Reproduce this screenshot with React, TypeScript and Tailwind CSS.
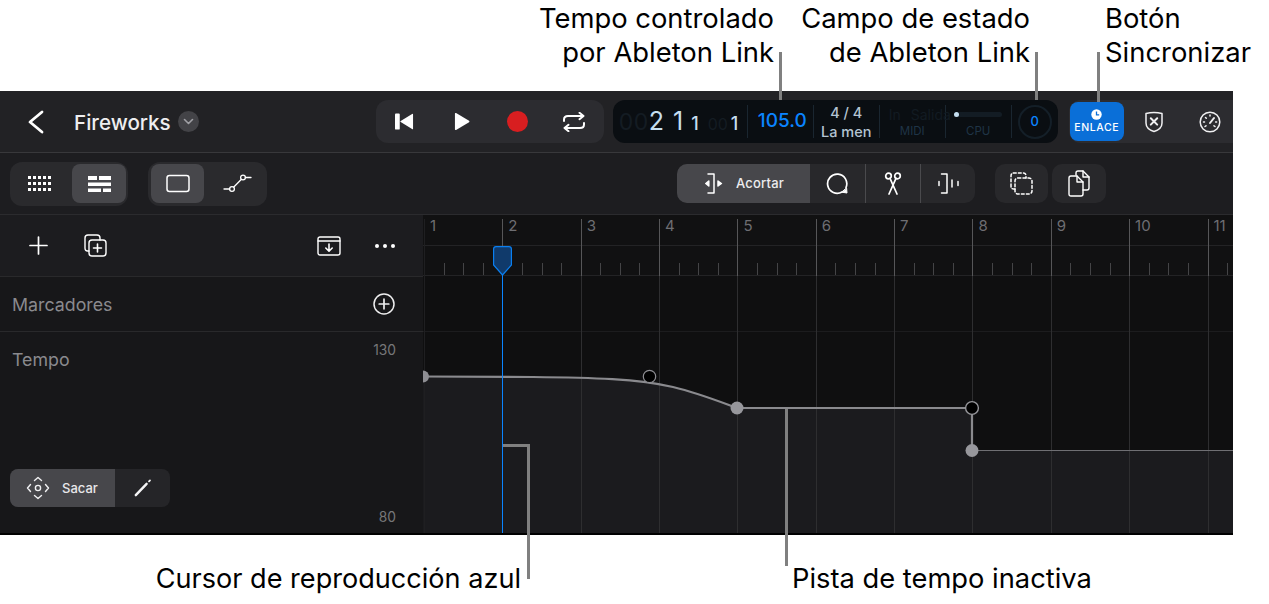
import React from "react";

const S = (p: React.SVGProps<SVGSVGElement>) => (
  <svg fill="none" stroke="currentColor" strokeLinecap="round" strokeLinejoin="round" {...p} />
);

const bars = [0, 1, 2, 3, 4, 5, 6, 7, 8, 9, 10];
const STEP = 78.35;
const X0 = 1;
const CURVE = "M0 161.5 L110 162 C170 162.5 215 164 250 172 C275 178 295 186 314 193 L549 193";

function Timeline() {
  const majors = bars.map((i) => Math.round(X0 + STEP * i) + 0.5);
  const ticks: number[] = [];
  for (let i = 0; i < 44; i++) if (i % 4 !== 0) ticks.push(Math.round(X0 + (STEP / 4) * i) + 0.5);
  return (
    <svg className="absolute inset-0" width="811" height="318" viewBox="0 0 811 318">
      <rect x="0" y="0" width="811" height="318" fill="#0f0f10" />
      <path d={CURVE + " L549 235.5 L811 235.5 L811 318 L0 318 Z"} fill="#1b1b1e" />
      <rect x="0" y="0" width="811" height="61" fill="#111112" />
      <line x1="0" x2="811" y1="30.5" y2="30.5" stroke="#232325" />
      <line x1="0" x2="811" y1="60.5" y2="60.5" stroke="#232325" />
      <line x1="0" x2="811" y1="116.5" y2="116.5" stroke="#1c1c1e" />
      {majors.map((x, i) => (
        <g key={x}>
          <line x1={x} x2={x} y1="4" y2="61" stroke={i === 0 ? "#1f1f21" : "#565658"} />
          <line x1={x} x2={x} y1="61" y2="318" stroke={i === 0 ? "#1f1f21" : "#2e2e30"} />
        </g>
      ))}
      {ticks.map((x) => (
        <line key={x} x1={x} x2={x} y1="48" y2="60" stroke="#444446" />
      ))}
      <path d={CURVE + " L549 235.5"} stroke="#8a8a8e" strokeWidth="2.2" fill="none" />
      <line x1="549" x2="811" y1="235.5" y2="235.5" stroke="#6f6f73" strokeWidth="1" />
      <path d="M0 155.5 A6 6 0 0 1 0 167.5 Z" fill="#8e8e93" />
      <circle cx="226.5" cy="161.5" r="6.2" fill="#000" stroke="#8e8e93" strokeWidth="1.2" />
      <circle cx="314" cy="193" r="6.5" fill="#97979c" />
      <circle cx="549" cy="193" r="6.4" fill="#000" stroke="#97979c" strokeWidth="1.4" />
      <circle cx="549" cy="235.5" r="6.5" fill="#97979c" />
    </svg>
  );
}

function Group({ className = "", children }: { className?: string; children: React.ReactNode }) {
  return <div className={"flex items-center rounded-[10px] " + className}>{children}</div>;
}

function Callout({ first, second, className }: { first: string; second: string; className: string }) {
  return (
    <div className={className}>
      <div>{first}</div>
      <div>{second}</div>
    </div>
  );
}

export default function App() {
  const sans = "[font-family:Inter,'Liberation_Sans',sans-serif]";
  return (
    <div className={"relative h-[604px] w-[1269px] overflow-hidden bg-white text-black " + sans}>
      {/* top callouts */}
      <div className="flex h-[91px] pt-[1px] text-[27.4px] leading-[34px]">
        <Callout first="Tempo controlado" second="por Ableton Link" className="ml-[474px] w-[300px] text-right" />
        <Callout first="Campo de estado" second="de Ableton Link" className="ml-[16px] w-[240px] text-right" />
        <Callout first="Botón" second="Sincronizar" className="ml-[75px] w-[160px] whitespace-nowrap" />
      </div>

      {/* application */}
      <div className="flex h-[444px] w-[1233px] flex-col overflow-hidden border-b-2 border-black bg-[#1c1c1f] text-white">
        {/* transport bar */}
        <div className="flex h-[62px] shrink-0 items-center border-b border-[#38383b] bg-[#222225]">
          <S width="18" height="26" viewBox="0 0 18 26" strokeWidth="2.8" className="ml-[27px] text-white">
            <path d="M15 3 L3 13 L15 23" />
          </S>
          <span className="ml-[29px] mt-[4px] text-[20.6px] font-medium text-[#eeeef0]">Fireworks</span>
          <span className="ml-[7px] flex h-[21px] w-[21px] items-center justify-center rounded-full bg-[#434347] text-[#a0a0a5]">
            <S width="11" height="8" viewBox="0 0 11 8" strokeWidth="1.6"><path d="M1.5 1.5 L5.5 5.5 L9.5 1.5" /></S>
          </span>
          <Group className="ml-[177px] h-[43px] w-[228px] bg-[#2c2c30] rounded-[12px]">
            <svg width="19" height="17" viewBox="0 0 20 17" fill="#fff" className="ml-[19px]">
              <rect x="0" y="0" width="5" height="17" rx="1" />
              <path d="M19 1 V16 Q19 17 18 16.4 L6 9 Q5 8.5 6 8 L18 .6 Q19 0 19 1Z" />
            </svg>
            <svg width="16" height="19" viewBox="0 0 17 19" fill="#fff" className="ml-[40px]">
              <path d="M1 1.2 Q1 0 2.2 .6 L16 8.6 Q17 9.5 16 10.4 L2.2 18.4 Q1 19 1 17.8Z" />
            </svg>
            <span className="ml-[37px] h-[21px] w-[21px] rounded-full bg-[#d81e20]" />
            <S width="24" height="20" viewBox="0 0 24 20" strokeWidth="2" className="ml-[34px]">
              <path d="M2 9 V7.5 Q2 4 6 4 H21 M17.5 .8 L21.5 4 L17.5 7.2 M22 11 V12.5 Q22 16 18 16 H3 M6.5 12.8 L2.5 16 L6.5 19.2" />
            </S>
          </Group>

          {/* LCD */}
          <div className="ml-[9px] flex h-[43px] w-[445px] items-center rounded-[12px] bg-[#0a0e12] text-[#c5deef]">
            <div className="flex h-[33px] w-[135px] items-baseline border-r border-[#1a2630] pl-[6px] leading-[33px]">
              <span className="text-[23px] text-[#141c23] tracking-[0.5px]">00</span>
              <span className="text-[25px]">2</span>
              <span className="ml-[9px] text-[25px]">1</span>
              <span className="ml-[8px] text-[18px] font-medium">1</span>
              <span className="ml-[9px] text-[16px] text-[#141c23]">00</span>
              <span className="ml-[3px] text-[18px] font-medium">1</span>
            </div>
            <div className="flex h-[33px] w-[66px] items-center justify-center border-r border-[#1a2630] pl-[4px] text-[19px] font-medium text-[#0a84ff]">
              105.0
            </div>
            <div className="flex h-[33px] w-[66px] flex-col items-center justify-center border-r border-[#1a2630] text-[14.5px] font-medium leading-[19px] text-[#b4c4d2]">
              <span>4 / 4</span>
              <span>La men</span>
            </div>
            <div className="flex h-[33px] w-[66px] flex-col items-center justify-between border-r border-[#1a2630] text-[#1f3446]">
              <span className="flex gap-[10px] self-start whitespace-nowrap pl-[9px] text-[14px] leading-[20px] text-[#121b22]">
                <span>In</span>
                <span>Salida</span>
              </span>
              <span className="text-[11.5px] leading-[13px]">MIDI</span>
            </div>
            <div className="flex h-[33px] w-[66px] flex-col items-center justify-between border-r border-[#1a2630] text-[#1f3446]">
              <span className="mt-[7px] flex h-[5px] w-[48px] items-center rounded-full bg-[#131c24]">
                <span className="h-[5px] w-[5px] rounded-full bg-[#c5deef]" />
              </span>
              <span className="text-[11.5px] leading-[13px]">CPU</span>
            </div>
            <div className="ml-[6px] flex h-[34px] w-[34px] items-center justify-center rounded-full border-2 border-[#141f28] text-[13px] font-medium text-[#0a84ff]">
              0
            </div>
          </div>

          {/* right group */}
          <div className="ml-[11px] flex h-[43px] flex-1 items-center rounded-l-[12px] bg-[#2c2c30] pl-[1px]">
            <div className="flex h-[39px] w-[54px] flex-col items-center justify-center rounded-[8px] bg-[#0a6fd8] text-white">
              <svg width="11" height="11" viewBox="0 0 11 11" className="mb-[2px]">
                <circle cx="5.5" cy="5.5" r="5.2" fill="#fff" />
                <path d="M5.5 2.6 V5.8 H8.2" stroke="#0a6fd8" strokeWidth="1.3" fill="none" />
              </svg>
              <span className="text-[10.5px] font-medium leading-[12px] tracking-[0.6px]">ENLACE</span>
            </div>
            <S width="20" height="22" viewBox="0 0 20 22" strokeWidth="1.5" className="ml-[20px] text-[#f0f0f2]">
              <path d="M2 2.5 Q10 .5 18 2.5 V12 Q18 18 10 20.5 Q2 18 2 12 Z" />
              <path d="M6.8 7.2 L13.2 13.6 M13.2 7.2 L6.8 13.6" strokeWidth="2" />
            </S>
            <S width="22" height="22" viewBox="0 0 22 22" strokeWidth="1.5" className="ml-[35px] text-[#f0f0f2]">
              <circle cx="11" cy="11" r="9.8" />
              <path d="M11 12 L15 7" strokeWidth="2" />
              <path d="M4.5 11 H5.5 M6.5 6.5 L7.3 7.3 M11 4 V5 M16.6 11 H17.6 M6 15.5 L7 14.8 M16 15.5 L15 14.8" />
            </S>
          </div>
        </div>

        {/* tool bar */}
        <div className="flex h-[62px] shrink-0 items-center border-b border-[#2b2b2e] bg-[#1d1d20]">
          <Group className="ml-[10px] h-[44px] w-[118px] bg-[#2a2a2d] pl-[2px] pr-[2px] rounded-[12px]">
            <div className="flex h-[39px] w-[60px] items-center justify-center pr-[6px]">
              <svg width="23" height="15" viewBox="0 0 23 15" fill="#fff">
                {[0, 6, 12].map((y) => [0, 5, 10, 15, 20].map((x) => <rect key={x + "-" + y} x={x} y={y} width="3" height="3" />))}
              </svg>
            </div>
            <div className="flex h-[39px] w-[54px] items-center justify-center rounded-[8px] bg-[#47474b]">
              <svg width="23" height="16" viewBox="0 0 23 16" fill="#fff">
                <rect x="0" y="0" width="9" height="4" />
                <rect x="11" y="0" width="12" height="4" />
                <rect x="0" y="6.5" width="23" height="3.5" />
                <rect x="0" y="12.5" width="13" height="3.5" />
                <rect x="15" y="12.5" width="8" height="3.5" />
              </svg>
            </div>
          </Group>
          <Group className="ml-[20px] h-[44px] w-[119px] bg-[#2a2a2d] pl-[3px] rounded-[12px]">
            <div className="flex h-[39px] w-[53px] items-center justify-center rounded-[8px] bg-[#47474b]">
              <S width="24" height="19" viewBox="0 0 24 19" strokeWidth="1.5"><rect x="1" y="1.5" width="22" height="16" rx="2.5" /></S>
            </div>
            <div className="flex h-[39px] w-[63px] items-center justify-center pl-[3px]">
              <S width="29" height="19" viewBox="0 0 29 19" strokeWidth="1.3">
                <circle cx="9" cy="15" r="2.4" />
                <circle cx="20" cy="3.5" r="2.4" />
                <path d="M1 15 H6.6 M10.8 13 L18.2 5.5 M22.4 3.5 H28" />
              </S>
            </div>
          </Group>

          <Group className="ml-[410px] h-[39px] w-[298px] overflow-hidden bg-[#28282b]">
            <div className="flex h-full w-[133px] items-center gap-[13px] bg-[#47474b] pl-[28px]">
              <S width="18" height="21" viewBox="0 0 18 21" strokeWidth="1.5">
                <path d="M3 1 H9 V20 H3" />
                <path d="M3.8 8 L.8 10.5 L3.8 13 Z M13 8 L16.4 10.5 L13 13 Z" fill="#fff" />
              </S>
              <span className="text-[13px] font-medium tracking-[0.2px] text-[#ececee]">Acortar</span>
            </div>
            <div className="flex h-full w-[56px] items-center justify-center border-r border-[#4a4a4d]">
              <S width="23" height="23" viewBox="0 0 23 23" strokeWidth="1.7">
                <path d="M16 20 A9.6 9.6 0 1 1 20 15.5" />
                <path d="M20.6 16.2 L21 21 L16 20.2 Z" fill="#fff" strokeWidth="1" />
              </S>
            </div>
            <div className="flex h-full w-[55px] items-center justify-center border-r border-[#4a4a4d]">
              <S width="18" height="23" viewBox="0 0 18 23" strokeWidth="1.7">
                <circle cx="4.5" cy="4" r="2.8" />
                <circle cx="13.5" cy="4" r="2.8" />
                <path d="M6 6.4 L13 22 M12 6.4 L5 22" />
              </S>
            </div>
            <div className="flex h-full flex-1 items-center justify-center">
              <S width="21" height="21" viewBox="0 0 21 21" strokeWidth="1.5">
                <path d="M3.5 1 H9 V20 H3.5 M1 8.5 V12.5 M14 7 V14 M20 8.5 V12.5" />
              </S>
            </div>
          </Group>

          <Group className="ml-[20px] h-[39px] w-[53px] justify-center bg-[#28282b]">
            <S width="23" height="23" viewBox="0 0 23 23" strokeWidth="1.5" strokeDasharray="2.8 2.2">
              <rect x="5" y="6" width="17" height="16" rx="3" />
              <path d="M5 17 H3.5 Q1 17 1 14 V4 Q1 1 4 1 H13 Q16 1 16 4 V6" />
            </S>
          </Group>
          <Group className="ml-[4px] h-[39px] w-[54px] justify-center bg-[#28282b]">
            <S width="22" height="27" viewBox="0 0 22 27" strokeWidth="1.4">
              <path d="M8 5 V3 Q8 1 10 1 H15 L21 7 V18 Q21 20 19 20 H15" />
              <path d="M15 1 V7 H21" />
              <path d="M3 6 H9 L15 12 V24 Q15 26 13 26 H3 Q1 26 1 24 V8 Q1 6 3 6 Z" />
              <path d="M9 6 V12 H15" />
            </S>
          </Group>
        </div>

        {/* workspace */}
        <div className="flex min-h-0 flex-1">
          <div className="flex w-[423px] shrink-0 flex-col bg-[#171719]">
            <div className="flex h-[62px] shrink-0 items-center border-b border-[#29292b] bg-[#1c1c1f]">
              <S width="19" height="19" viewBox="0 0 19 19" strokeWidth="1.7" className="ml-[29px]"><path d="M9.5 1 V18 M1 9.5 H18" /></S>
              <S width="23" height="23" viewBox="0 0 23 23" strokeWidth="1.4" className="ml-[36px]">
                <path d="M5 17 H3.5 Q1 17 1 14 V4 Q1 1 4 1 H13 Q16 1 16 4 V6" />
                <rect x="5" y="6" width="17" height="16" rx="3" />
                <path d="M13.5 10 V18 M9.5 14 H17.5" strokeWidth="1.6" />
              </S>
              <S width="24" height="20" viewBox="0 0 24 20" strokeWidth="1.4" className="ml-[210px]">
                <rect x="1" y="1" width="22" height="18" rx="2" />
                <path d="M1 5 H23" />
                <path d="M12 8 V15 M8.8 12 L12 15.2 L15.2 12" strokeWidth="1.6" />
              </S>
              <svg width="20" height="4" viewBox="0 0 20 4" fill="#fff" className="ml-[34px]">
                <circle cx="2" cy="2" r="2" /><circle cx="10" cy="2" r="2" /><circle cx="18" cy="2" r="2" />
              </svg>
            </div>
            <div className="flex h-[55px] shrink-0 items-center border-b border-[#29292b] pl-[12px] text-[17.8px] text-[#8a8a8e]">
              <span className="mt-[2px]">Marcadores</span>
              <S width="22" height="22" viewBox="0 0 22 22" strokeWidth="1.5" className="ml-[261px] text-[#eeeeef]">
                <circle cx="11" cy="11" r="10" />
                <path d="M11 6.2 V15.8 M6.2 11 H15.8" strokeWidth="1.7" />
              </S>
            </div>
            <div className="flex min-h-0 flex-1 pl-[12px]">
              <div className="flex flex-1 flex-col justify-between pb-[26px] pt-[16px] text-[17.8px] text-[#8a8a8e]">
                <span className="leading-[24px]">Tempo</span>
                <div className="-ml-[2px] flex h-[38px] w-[160px] overflow-hidden rounded-[8px] bg-[#252528]">
                  <div className="flex w-[105px] items-center gap-[12px] bg-[#47474b] pl-[16px]">
                    <S width="24" height="24" viewBox="0 0 24 24" strokeWidth="1.4" className="text-[#f0f0f2]">
                      <circle cx="12" cy="12" r="2.6" />
                      <path d="M8.5 4.5 L12 1.5 L15.5 4.5 M8.5 19.5 L12 22.5 L15.5 19.5 M4.5 8.5 L1.5 12 L4.5 15.5 M19.5 8.5 L22.5 12 L19.5 15.5" />
                    </S>
                    <span className="mt-[1px] text-[13px] font-medium text-[#e8e8ea]">Sacar</span>
                  </div>
                  <div className="flex flex-1 items-center justify-center">
                    <S width="18" height="18" viewBox="0 0 18 18" strokeWidth="2.4" className="text-[#f4f4f5]">
                      <path d="M1.8 16.2 L12.6 4.8" />
                      <path d="M15 2.4 L16 1.4" strokeWidth="1.8" />
                    </S>
                  </div>
                </div>
              </div>
              <div className="flex w-[85px] flex-col items-end justify-between pb-[8px] pr-[27px] pt-[10px] text-[13.8px] leading-[16px] text-[#77777a]">
                <span>130</span>
                <span>80</span>
              </div>
            </div>
          </div>

          {/* timeline */}
          <div className="relative min-w-0 flex-1 overflow-hidden bg-[#0f0f10]">
            <Timeline />
            <div className="relative flex h-[30px] pt-[1px] text-[15px] text-[#6e6e72]">
              {bars.map((i) => (
                <span key={i} className="w-[78.35px] shrink-0 pl-[7px] leading-[20px]">{i + 1}</span>
              ))}
            </div>
            {/* playhead */}
            <div className="absolute bottom-0 left-[79px] top-[60px] w-px bg-[#0a84ff]" />
            <svg className="absolute left-[70px] top-[31px]" width="19" height="30" viewBox="0 0 19 30">
              <path d="M3 .6 H16 Q18.4 .6 18.4 3 V19 L9.5 29 L.6 19 V3 Q.6 .6 3 .6Z" fill="#103a6b" stroke="#0a7ff0" strokeWidth="1.2" />
            </svg>
          </div>
        </div>
      </div>

      {/* bottom callouts */}
      <div className="flex h-[69px] items-start pt-[26px] leading-[35px]">
        <div className="w-[521px] text-right text-[27.1px]">Cursor de reproducción azul</div>
        <div className="ml-[271px] whitespace-nowrap text-[27.3px]">Pista de tempo inactiva</div>
      </div>

      {/* leader lines */}
      <div className="absolute left-[779px] top-[52px] h-[48px] w-[3px] bg-[#808080]" />
      <div className="absolute left-[1035px] top-[52px] h-[48px] w-[3px] bg-[#808080]" />
      <div className="absolute left-[1097px] top-[52px] h-[50px] w-[3px] bg-[#808080]" />
      <div className="absolute left-[503px] top-[444px] h-[3px] w-[27px] bg-[#808080]" />
      <div className="absolute left-[527px] top-[444px] h-[135px] w-[3px] bg-[#808080]" />
      <div className="absolute left-[785px] top-[409px] h-[157px] w-[3px] bg-[#808080]" />
    </div>
  );
}
